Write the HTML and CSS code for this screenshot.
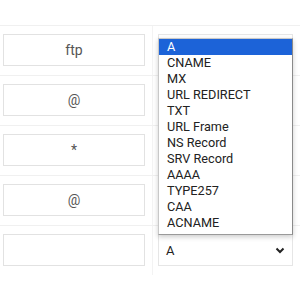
FILE: index.html
```html
<!DOCTYPE html>
<html lang="en">
<head>
    <meta charset="UTF-8">
    <title>DNS records</title>
    <link rel="stylesheet" href="styles.css">
</head>
<body>
    <div class="records">
        <div class="row">
            <div class="cell"><div class="host">ftp</div></div>
            <div class="cell type"><div class="select"></div></div>
        </div>
        <div class="row">
            <div class="cell"><div class="host">@</div></div>
            <div class="cell type"><div class="select"></div></div>
        </div>
        <div class="row">
            <div class="cell"><div class="host">*</div></div>
            <div class="cell type"><div class="select"></div></div>
        </div>
        <div class="row">
            <div class="cell"><div class="host">@</div></div>
            <div class="cell type"><div class="select"></div></div>
        </div>
        <div class="row">
            <div class="cell"><div class="host"></div></div>
            <div class="cell type">
                <div class="select">
                    <span>A</span>
                    <svg width="10" height="7" viewBox="0 0 10 7"><path d="M1.5 1.5 L5 5 L8.5 1.5" fill="none" stroke="#222" stroke-width="2"/></svg>
                </div>
            </div>
        </div>
        <ul class="options">
            <li class="selected">A</li>
            <li>CNAME</li>
            <li>MX</li>
            <li>URL REDIRECT</li>
            <li>TXT</li>
            <li>URL Frame</li>
            <li>NS Record</li>
            <li>SRV Record</li>
            <li>AAAA</li>
            <li>TYPE257</li>
            <li>CAA</li>
            <li>ACNAME</li>
        </ul>
    </div>
</body>
</html>
```

FILE: styles.css
```css
body {
    margin: 0;
    background: #fff;
    font-family: Roboto, "Liberation Sans", sans-serif;
}
.records {
    position: relative;
    padding-top: 25px;
    width: 300px;
}
.row {
    display: grid;
    grid-template-columns: 152px 148px;
    height: 50px;
    box-sizing: border-box;
    border-top: 1px solid #f0f0f0;
}
.cell {
    padding: 8px 0 0 3px;
}
.cell.type {
    border-left: 1px solid #f3f3f3;
    padding-left: 5px;
}
.host {
    width: 142px;
    height: 32px;
    box-sizing: border-box;
    border: 1px solid #e2e2e2;
    color: #555;
    font-size: 14px;
    display: flex;
    align-items: center;
    justify-content: center;
}
.select {
    width: 135px;
    height: 32px;
    box-sizing: border-box;
    border: 1px solid #e6e6e6;
    display: flex;
    align-items: center;
    justify-content: space-between;
    padding: 0 7px 0 7px;
    font-size: 13px;
    color: #222;
}
.options {
    position: absolute;
    top: 38px;
    left: 158px;
    width: 135px;
    height: 197px;
    box-sizing: border-box;
    margin: 0;
    padding: 0 0 4px;
    list-style: none;
    background: #fff;
    border: 1px solid #c8c8c8;
    border-right-color: #8a8a8a;
    border-bottom-color: #9a9a9a;
    box-shadow: 0 2px 5px rgba(0,0,0,0.2);
    font-size: 12.7px;
    color: #222;
}
.options li {
    height: 16px;
    line-height: 16px;
    padding-left: 8px;
}
.options li.selected {
    background: #1c63d8;
    color: #fff;
}
```
